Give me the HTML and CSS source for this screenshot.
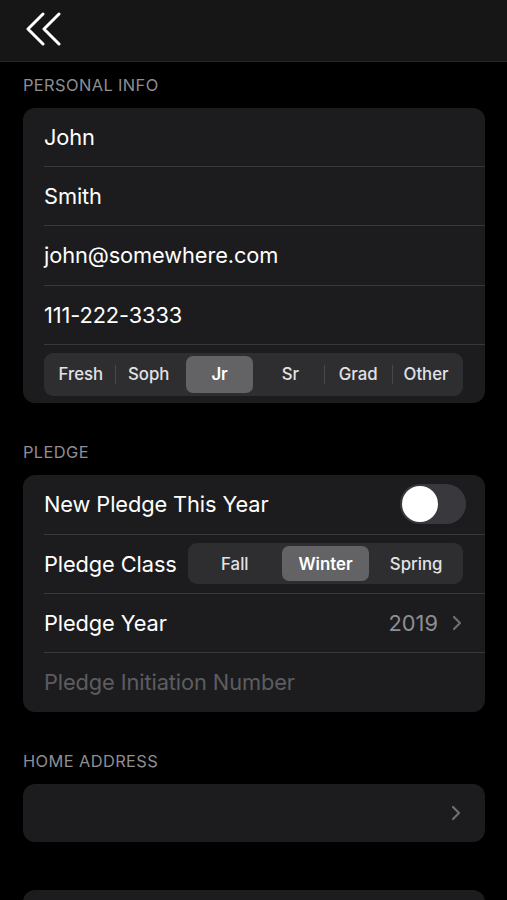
FILE: index.html
```html
<!DOCTYPE html>
<html lang="en">
<head>
    <meta charset="UTF-8">
    <meta name="viewport" content="width=device-width, initial-scale=1.0">
    <title>Edit Member</title>
    <link rel="stylesheet" href="styles.css">
</head>
<body>

<div class="nav-bar">
    <svg class="back-icon" width="40" height="36" viewBox="0 0 40 36" xmlns="http://www.w3.org/2000/svg">
        <!-- double chevron -->
        <polyline points="18,2 3,17 18,32" stroke="white" stroke-width="3" fill="none" stroke-linecap="round" stroke-linejoin="round" />
        <polyline points="34,2 19,17 34,32" stroke="white" stroke-width="3" fill="none" stroke-linecap="round" stroke-linejoin="round" />
    </svg>
</div>

<div class="section-title first">PERSONAL INFO</div>
<div class="card">
    <div class="row"><span class="label">John</span></div>
    <div class="row"><span class="label">Smith</span></div>
    <div class="row"><span class="label">john@somewhere.com</span></div>
    <div class="row"><span class="label">111-222-3333</span></div>
    <div class="row seg-row">
        <div class="segmented wide">
            <div class="seg">Fresh</div>
            <div class="seg divided">Soph</div>
            <div class="seg selected">Jr</div>
            <div class="seg">Sr</div>
            <div class="seg divided">Grad</div>
            <div class="seg divided">Other</div>
        </div>
    </div>
</div>

<div class="section-title">PLEDGE</div>
<div class="card">
    <div class="row">
        <span class="label">New Pledge This Year</span>
        <div class="toggle"><div class="knob"></div></div>
    </div>
    <div class="row">
        <span class="label">Pledge Class</span>
        <div class="segmented narrow">
            <div class="seg">Fall</div>
            <div class="seg selected">Winter</div>
            <div class="seg">Spring</div>
        </div>
    </div>
    <div class="row">
        <span class="label">Pledge Year</span>
        <span class="value">2019
            <svg class="chevron" width="10" height="16" viewBox="0 0 10 16" xmlns="http://www.w3.org/2000/svg">
                <polyline points="2,2 8,8 2,14" stroke="#6e6e73" stroke-width="2.2" fill="none" stroke-linecap="round" stroke-linejoin="round" />
            </svg>
        </span>
    </div>
    <div class="row"><span class="label placeholder">Pledge Initiation Number</span></div>
</div>

<div class="section-title">HOME ADDRESS</div>
<div class="card">
    <div class="row end">
        <svg class="chevron" width="10" height="16" viewBox="0 0 10 16" xmlns="http://www.w3.org/2000/svg">
            <polyline points="2,2 8,8 2,14" stroke="#6e6e73" stroke-width="2.2" fill="none" stroke-linecap="round" stroke-linejoin="round" />
        </svg>
    </div>
</div>

<div class="section-title empty"></div>
<div class="card">
    <div class="row"></div>
</div>

</body>
</html>
```

FILE: styles.css
```css
body {
    margin: 0;
    background-color: #000;
    color: #fff;
    font-family: Inter, "Noto Sans", sans-serif;
}
.nav-bar {
    height: 61px;
    background-color: #161616;
    border-bottom: 1px solid #262626;
    display: flex;
    align-items: center;
    padding-left: 25px;
}
.back-icon {
    margin-top: -2px;
}
.section-title {
    padding: 39px 23px 0;
    height: 33px;
    font-size: 16.4px;
    line-height: 20px;
    color: #8e8e93;
    letter-spacing: 0.4px;
}
.section-title.first {
    padding-top: 13px;
    height: 33px;
}
.section-title.empty {
    height: 9px;
}
.card {
    margin: 0 22px 0 23px;
    background-color: #1c1c1e;
    border-radius: 12px;
    padding-left: 21px;
    overflow: hidden;
}
.row {
    height: 58.2px;
    border-bottom: 1px solid #38383a;
    display: flex;
    align-items: center;
    justify-content: space-between;
    padding-right: 19px;
}
.row:last-child {
    border-bottom: none;
    height: 58.6px;
}
.row.end {
    justify-content: flex-end;
    padding-right: 24px;
}
.label {
    font-size: 21.8px;
    letter-spacing: -0.1px;
}
.placeholder {
    color: #5d5d61;
}
.value {
    display: flex;
    align-items: center;
    gap: 14px;
    font-size: 21.8px;
    color: #8e8e93;
    margin-right: 4px;
}
.seg-row {
    padding-right: 22px;
}
.segmented {
    display: flex;
    background-color: #2e2e31;
    border-radius: 9px;
    padding: 3px;
    height: 43px;
    box-sizing: border-box;
}
.segmented.wide {
    width: 419px;
}
.segmented.narrow {
    width: 275px;
    height: 41px;
    margin-right: 3px;
}
.seg {
    flex: 1;
    display: flex;
    align-items: center;
    justify-content: center;
    font-size: 16.8px;
    font-weight: 500;
    color: #e2e2e5;
    border-radius: 7px;
    position: relative;
}
.seg.divided::before {
    content: "";
    position: absolute;
    left: 0;
    top: 9px;
    bottom: 9px;
    width: 1px;
    background-color: #48484b;
}
.seg.selected {
    background-color: #636366;
    color: #fff;
    font-weight: 600;
    margin: 0 3px;
}
.toggle {
    width: 66px;
    height: 40px;
    border-radius: 20px;
    background-color: #39393d;
    padding: 2px;
    box-sizing: border-box;
}
.knob {
    width: 36px;
    height: 36px;
    border-radius: 50%;
    background-color: #fff;
}
```
